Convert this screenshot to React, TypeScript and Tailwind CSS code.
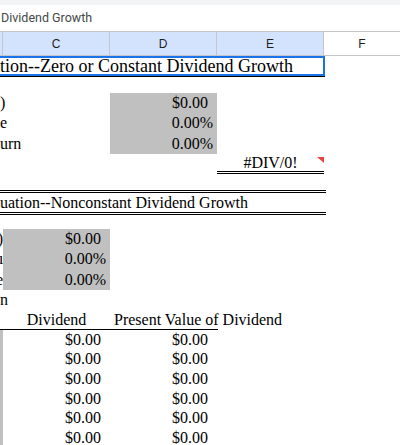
const serif = "font-['Liberation_Serif','Times_New_Roman',serif] text-[16px] text-black";

function Cells({ b, c, d, e, f, className = "" }: { b?: React.ReactNode; c?: React.ReactNode; d?: React.ReactNode; e?: React.ReactNode; f?: React.ReactNode; className?: string }) {
  return (
    <div className={`flex ${className}`}>
      <div className="w-[3px] shrink-0 h-full">{b}</div>
      <div className="w-[107px] shrink-0 h-full">{c}</div>
      <div className="w-[107px] shrink-0 h-full">{d}</div>
      <div className="w-[107px] shrink-0 h-full">{e}</div>
      <div className="w-[76px] shrink-0 h-full">{f}</div>
    </div>
  );
}

const money = (
  <div className="h-full flex items-center justify-end pr-[9px] whitespace-nowrap">$0.00</div>
);
const pct = (
  <div className="h-full flex items-center justify-end pr-[4px] whitespace-nowrap">0.00%</div>
);

function Label({ text }: { text: string }) {
  return <div className="h-full flex items-center whitespace-nowrap">{text}</div>;
}

// label that runs into the grey cell next to it; the grey cell paints over it
function Hidden({ text }: { text: string }) {
  return <div className="h-full flex items-center justify-end whitespace-nowrap">{text}</div>;
}

function Grey({ children }: { children: React.ReactNode }) {
  return <div className="relative h-full bg-[#c0c0c0]">{children}</div>;
}

export default function App() {
  const dataRows = [0, 1, 2, 3, 4, 5];

  return (
    <div className="w-[400px] h-[445px] overflow-hidden bg-white">
      {/* top chrome */}
      <div className="h-[5px] bg-[#f3f4f6]" />
      <div className="h-[26px] flex items-center pl-[1px] font-['Roboto','Liberation_Sans',sans-serif] text-[12.5px] text-[#444746] whitespace-nowrap">
        Dividend Growth
      </div>

      {/* column headers */}
      <div className="h-[25px] flex border-y border-[#c4c7c5] font-['Liberation_Sans',Arial,sans-serif] text-[12px] text-[#1f1f1f]">
        <div className="w-[3px] shrink-0 bg-[#d3e3fd] border-r border-[#c4c7c5]" />
        {["C", "D", "E"].map((l) => (
          <div key={l} className="w-[107px] shrink-0 bg-[#d3e3fd] border-r border-[#c4c7c5] flex items-center justify-center">
            {l}
          </div>
        ))}
        <div className="w-[76px] shrink-0 flex items-center justify-center">F</div>
      </div>

      <div className={serif}>
        {/* section 1 title */}
        <div className="relative h-[21px] w-[325px] border-b border-black">
          <div className="h-full flex items-center whitespace-nowrap underline underline-offset-[2px] text-[18px] leading-none">
            tion--Zero or Constant Dividend Growth
          </div>
          <div className="absolute left-[-3px] top-0 right-0 bottom-0 border-2 border-[#1a73e8]" />
        </div>
        <div className="h-[16px]" />

        <Cells className="h-[20px]" b={<Label text=")" />} d={<Grey>{money}</Grey>} />
        <Cells className="h-[20px]" b={<Label text="e" />} d={<Grey>{pct}</Grey>} />
        <Cells className="h-[21px]" b={<Label text="urn" />} d={<Grey>{pct}</Grey>} />
        <Cells
          className="h-[20px]"
          e={
            <div className="relative h-full border-b-[3px] border-double border-black flex items-center justify-center">
              #DIV/0!
              <svg className="absolute right-0 top-[3px]" width="7" height="6" viewBox="0 0 7 6">
                <polygon points="0,0 7,0 7,6" fill="#e8453c" />
              </svg>
            </div>
          }
        />
        <div className="h-[16px]" />

        {/* section 2 title */}
        <div className="h-[25px] w-[326px] border-y-[3px] border-double border-black flex items-center whitespace-nowrap">
          uation--Nonconstant Dividend Growth
        </div>
        <div className="h-[14px]" />

        <Cells className="h-[20px]" b={<Hidden text=")" />} c={<Grey>{money}</Grey>} />
        <Cells className="h-[20px]" b={<Hidden text="u" />} c={<Grey>{pct}</Grey>} />
        <Cells className="h-[21px]" b={<Hidden text="e" />} c={<Grey>{pct}</Grey>} />
        <Cells className="h-[20px]" b={<Label text="n" />} />

        {/* table header */}
        <div className="flex h-[20px] w-[218px] border-b border-black">
          <div className="w-[3px] shrink-0" />
          <div className="w-[107px] shrink-0 flex items-center justify-center">Dividend</div>
          <div className="w-[107px] shrink-0 flex items-center pl-[4px] whitespace-nowrap">Present Value of Dividend</div>
        </div>

        {dataRows.map((i) => (
          <Cells key={i} className="h-[19.6px]" b={<div className="h-full bg-[#c0c0c0]" />} c={money} d={money} />
        ))}
      </div>
    </div>
  );
}
